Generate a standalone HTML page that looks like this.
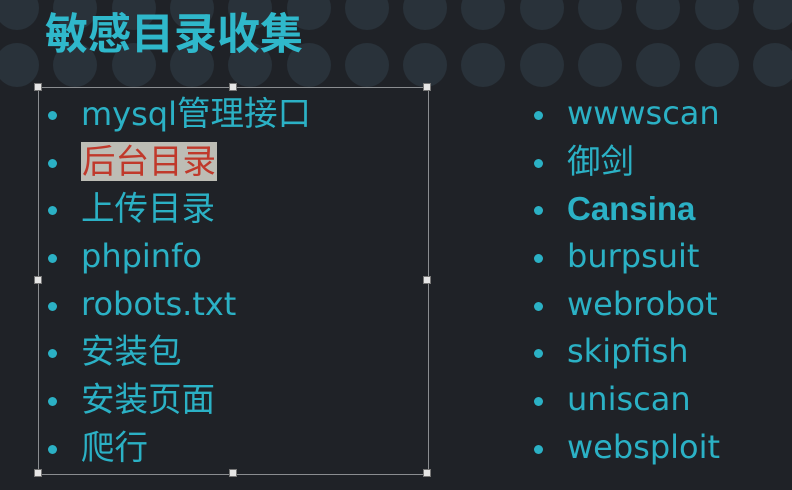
<!DOCTYPE html>
<html><head><meta charset="utf-8"><style>
html,body{margin:0;padding:0}
body{width:792px;height:490px;background:#1f2227;position:relative;overflow:hidden;font-family:"DejaVu Sans","Noto Sans CJK SC",sans-serif;color:#2bb1c5}
.dot{position:absolute;width:44px;height:44px;border-radius:50%;background:#29323a}
.title{position:absolute;left:45px;top:5px;font-size:43px;font-weight:bold;font-family:"Noto Sans CJK SC",sans-serif;line-height:52px;color:#2fb8cb}
ul{position:absolute;margin:0;padding:0;list-style:none}
li{height:47.7px;line-height:47.7px;font-size:32px;white-space:nowrap;position:relative}
li:before{content:"";position:absolute;left:-33px;top:21px;width:9px;height:9px;border-radius:50%;background:#2bb1c5}
.c{font-size:33.5px}
.box{position:absolute;left:38px;top:87px;width:389px;height:386px;border:1px solid #8a8d90}
.h{position:absolute;width:6px;height:6px;background:#e6e6e6;border:1px solid #777}
.sel{background:#bdbdb5;color:#c0392b;padding:0 1px}
</style></head><body>
<div id="dots"></div>
<script>
var d=document.getElementById('dots'),s='';
for(var r=0;r<2;r++)for(var i=0;i<14;i++){var cx=17+i*58.3,cy=r?65:8;s+='<div class="dot" style="left:'+(cx-22)+'px;top:'+(cy-22)+'px"></div>'}
d.innerHTML=s;
</script>
<div class="title">敏感目录收集</div>
<div class="box"></div>
<div class="h" style="left:34px;top:83px"></div>
<div class="h" style="left:229px;top:83px"></div>
<div class="h" style="left:423px;top:83px"></div>
<div class="h" style="left:34px;top:276px"></div>
<div class="h" style="left:423px;top:276px"></div>
<div class="h" style="left:34px;top:469px"></div>
<div class="h" style="left:229px;top:469px"></div>
<div class="h" style="left:423px;top:469px"></div>
<ul style="left:81px;top:90px">
<li>mysql<span class="c">管理接口</span></li>
<li><span class="sel c">后台目录</span></li>
<li class="c">上传目录</li>
<li>phpinfo</li>
<li>robots.txt</li>
<li class="c">安装包</li>
<li class="c">安装页面</li>
<li class="c">爬行</li>
</ul>
<ul style="left:567px;top:90px">
<li>wwwscan</li>
<li class="c">御剑</li>
<li style="font-weight:bold;font-family:'Liberation Sans',sans-serif;font-size:33px">Cansina</li>
<li>burpsuit</li>
<li>webrobot</li>
<li>skipfish</li>
<li>uniscan</li>
<li>websploit</li>
</ul>
</body></html>
